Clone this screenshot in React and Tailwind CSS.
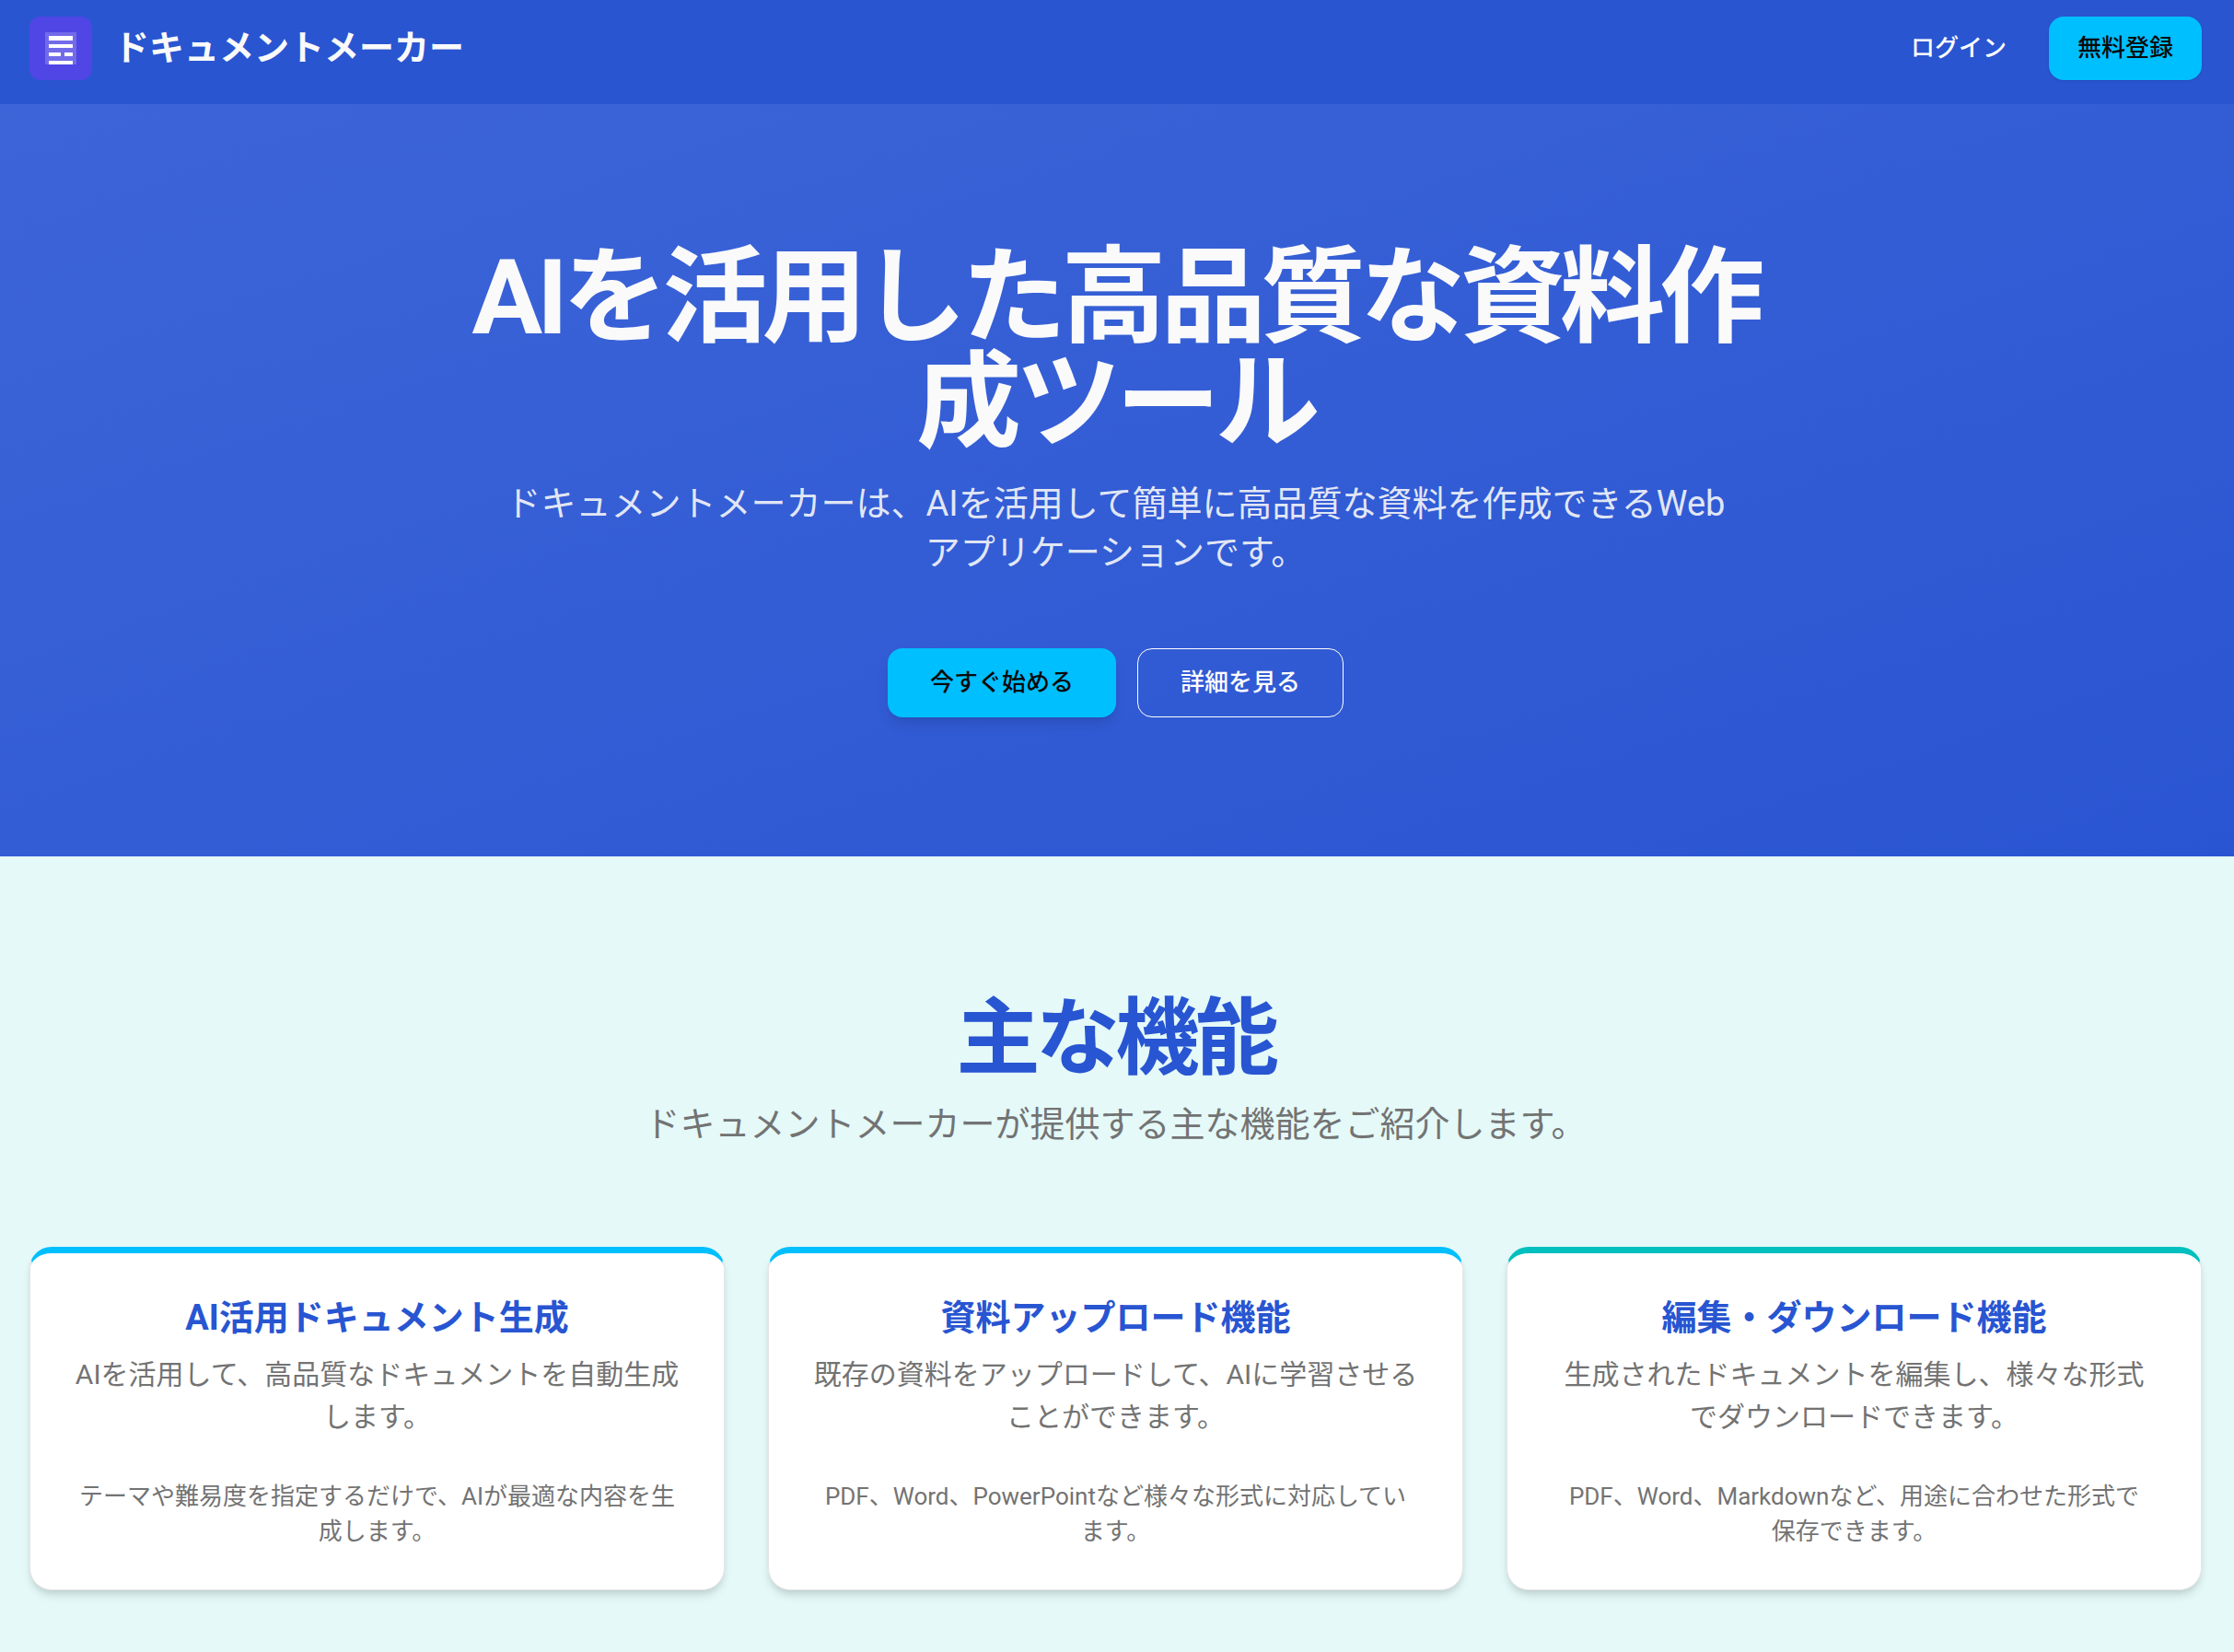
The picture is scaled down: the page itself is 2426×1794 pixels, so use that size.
const features = [
  {
    title: "AI活用ドキュメント生成",
    lead: "AIを活用して、高品質なドキュメントを自動生成します。",
    note: ["テーマや難易度を指定するだけで、AIが最適な内容を生", "成します。"],
    accent: "border-t-[#00bfff]",
  },
  {
    title: "資料アップロード機能",
    lead: "既存の資料をアップロードして、AIに学習させることができます。",
    note: ["PDF、Word、PowerPointなど様々な形式に対応してい", "ます。"],
    accent: "border-t-[#00bfff]",
  },
  {
    title: "編集・ダウンロード機能",
    lead: "生成されたドキュメントを編集し、様々な形式でダウンロードできます。",
    note: ["PDF、Word、Markdownなど、用途に合わせた形式で", "保存できます。"],
    accent: "border-t-[#00bfbf]",
  },
];

function LogoMark() {
  return (
    <span className="flex h-[69px] w-[68px] items-center justify-center rounded-xl bg-[#4f46e5]">
      <svg viewBox="0 0 34 35" className="h-[35px] w-[34px]" aria-hidden="true" shapeRendering="crispEdges">
        <rect width="34" height="35" fill="#fff" fillOpacity="0.2" />
        <g fill="#fff">
          <rect x="4" y="4" width="26" height="5" />
          <rect x="4" y="13" width="26" height="4" />
          <rect x="4" y="22" width="13" height="4" />
          <rect x="21" y="22" width="9" height="4" />
          <rect x="4" y="31" width="26" height="4" />
        </g>
      </svg>
    </span>
  );
}

function FeatureCard({ title, lead, note, accent }) {
  return (
    <article
      className={`rounded-3xl border border-t-[7px] border-[#e5e5e5] bg-white px-[47px] py-11 text-center shadow-[0_7px_11px_-2px_rgba(0,0,0,0.12),0_4px_8px_-4px_rgba(0,0,0,0.12)] ${accent}`}
    >
      <h3 className="text-[38px] leading-[53px] font-bold text-[#2855d1]">{title}</h3>
      <p className="mt-3 text-[30px] leading-[46px]">{lead}</p>
      <p className="mt-11 text-[26px] leading-[38px]">
        {note[0]}
        <span className="whitespace-nowrap">{note[1]}</span>
      </p>
    </article>
  );
}

export default function App() {
  return (
    <div className="min-h-screen bg-[#e4f9f8] font-[Roboto,'Noto_Sans_CJK_JP',sans-serif] text-[#737373]" lang="ja">
      <header className="flex items-start justify-between bg-[#2955d1] pt-[18px] pr-[35px] pb-[26px] pl-8">
        <a href="#" className="flex items-start gap-6">
          <LogoMark />
          <span className="text-[38px] leading-[69px] font-bold text-[#fafafa]">ドキュメントメーカー</span>
        </a>
        <nav className="flex gap-[15px] text-[26px] leading-[69px] font-medium">
          <a href="#login" className="px-[31px] text-white">ログイン</a>
          <a href="#signup" className="rounded-2xl bg-[#00bfff] px-[31px] text-[#0a0a0a] shadow-sm">無料登録</a>
        </nav>
      </header>

      <main>
        <section className="bg-linear-to-br from-[#3d65d8] to-[#2a55d2] pt-[153px] pr-[35px] pb-[151px] pl-8 text-center">
          <h1 className="mx-auto max-w-[1450px] text-[114px] leading-[114px] font-bold tracking-tighter text-[#fafafa]">
            AIを活用した高品質な資料作成ツール
          </h1>
          <p className="mx-auto mt-[27px] max-w-[1350px] text-[38px] leading-[53px] text-[#fafafa]/90">
            ドキュメントメーカーは、AIを活用して簡単に高品質な資料を作成できるWebアプリケーションです。
          </p>
          <div className="mt-[77px] flex justify-center gap-[23px] text-[26px] leading-[75px] font-medium">
            <button type="button" className="rounded-2xl bg-[#00bfff] px-[46px] text-[#0a0a0a] shadow-lg">
              今すぐ始める
            </button>
            <button type="button" className="rounded-2xl border border-white px-[46px] leading-[73px] text-white">
              詳細を見る
            </button>
          </div>
        </section>

        <section className="pt-[153px] pr-[35px] pb-[151px] pl-8">
          <div className="text-center">
            <h2 className="text-[91px] leading-[91px] font-bold tracking-tighter text-[#2855d1]">主な機能</h2>
            <p className="mt-[21px] text-[38px] leading-[53px]">ドキュメントメーカーが提供する主な機能をご紹介します。</p>
          </div>
          <div className="mt-[106px] grid grid-cols-3 gap-[47px]">
            {features.map((feature) => (
              <FeatureCard key={feature.title} {...feature} />
            ))}
          </div>
        </section>
      </main>
    </div>
  );
}
